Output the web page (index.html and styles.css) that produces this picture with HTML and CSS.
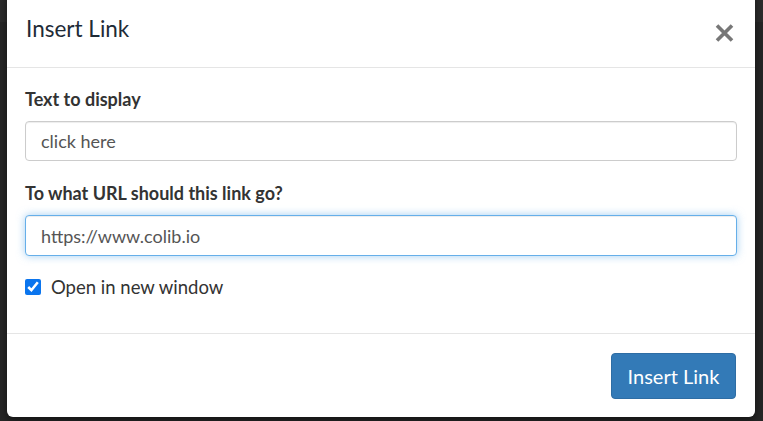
FILE: index.html
```html
<!DOCTYPE html>
<html>
<head>
<meta charset="utf-8">
<link rel="stylesheet" href="styles.css">
</head>
<body>
<div class="backdrop">
  <div class="page-strip"></div>
  <div class="modal">
    <div class="modal-header">
      <h4 class="modal-title">Insert Link</h4>
      <button class="close" aria-label="Close">
        <svg width="19" height="18" viewBox="0 0 19 18"><path d="M2 1.5 L17 16.5 M17 1.5 L2 16.5" stroke="#777" stroke-width="3.6" stroke-linecap="butt"/></svg>
      </button>
    </div>
    <div class="modal-body">
      <div class="form-group">
        <label class="field-label">Text to display</label>
        <input class="form-control" type="text" value="click here">
      </div>
      <div class="form-group">
        <label class="field-label">To what URL should this link go?</label>
        <input class="form-control focused" type="text" value="https://www.colib.io">
      </div>
      <label class="check"><input type="checkbox" checked><span>Open in new window</span></label>
    </div>
    <div class="modal-footer">
      <button class="btn-primary">Insert Link</button>
    </div>
  </div>
</div>
</body>
</html>
```

FILE: styles.css
```css
* { box-sizing: border-box; }
html, body { margin: 0; padding: 0; }
body {
  background: #262626;
  font-family: Lato, "Open Sans", sans-serif;
  width: 763px;
  height: 421px;
  overflow: hidden;
}
.backdrop {
  padding-left: 7px;
  position: relative;
  height: 421px;
}
.page-strip {
  position: absolute;
  left: 0; top: 0;
  width: 763px; height: 32px;
  background: #2c2c2c;
}
.modal {
  position: relative;
  width: 748px;
  margin-top: -10px;
  background: #fff;
  border-radius: 6px;
  box-shadow: 0 3px 9px rgba(0,0,0,.5);
  overflow: hidden;
}
.modal-header {
  height: 78px;
  padding: 0 21px 0 19px;
  display: flex;
  align-items: center;
  justify-content: space-between;
  border-bottom: 1px solid #e5e5e5;
}
.modal-title {
  margin: 0;
  font-size: 22.5px;
  font-weight: 400;
  color: #1e2b37;
}
.close {
  border: 0;
  background: none;
  padding: 0;
  width: 19px;
  height: 18px;
  display: flex;
  margin-top: 8px;
}
.modal-body {
  padding: 19px 18px 35px;
}
.form-group { margin-bottom: 20px; }
.field-label {
  display: block;
  font-size: 18px;
  line-height: 25px;
  font-weight: 700;
  color: #333;
  margin-bottom: 9px;
}
.form-control {
  display: block;
  width: 100%;
  height: 40px;
  padding: 0 15px;
  font-family: Lato, "Open Sans", sans-serif;
  font-size: 18px;
  color: #555;
  border: 1px solid #ccc;
  border-radius: 4px;
  background: #fff;
  outline: none;
  box-shadow: inset 0 1px 1px rgba(0,0,0,.075);
}
.form-control.focused {
  height: 41px;
  border-color: #66afe9;
  box-shadow: inset 0 1px 1px rgba(0,0,0,.075), 0 0 8px rgba(102,175,233,.6);
}
.check {
  display: flex;
  align-items: center;
  gap: 10px;
  font-size: 18.5px;
  color: #333;
  margin-top: 4px;
}
.check input {
  width: 16px;
  height: 16px;
  margin: 0;
  accent-color: #0b75ee;
}
.modal-footer {
  border-top: 1px solid #e5e5e5;
  padding: 19px 19px 18px;
  display: flex;
  justify-content: flex-end;
}
.btn-primary {
  width: 125px;
  height: 46px;
  background: #337ab7;
  color: #fff;
  border: 1px solid #2e6da4;
  border-radius: 4px;
  font-family: Lato, "Open Sans", sans-serif;
  font-size: 20px;
  padding: 0;
}
```
